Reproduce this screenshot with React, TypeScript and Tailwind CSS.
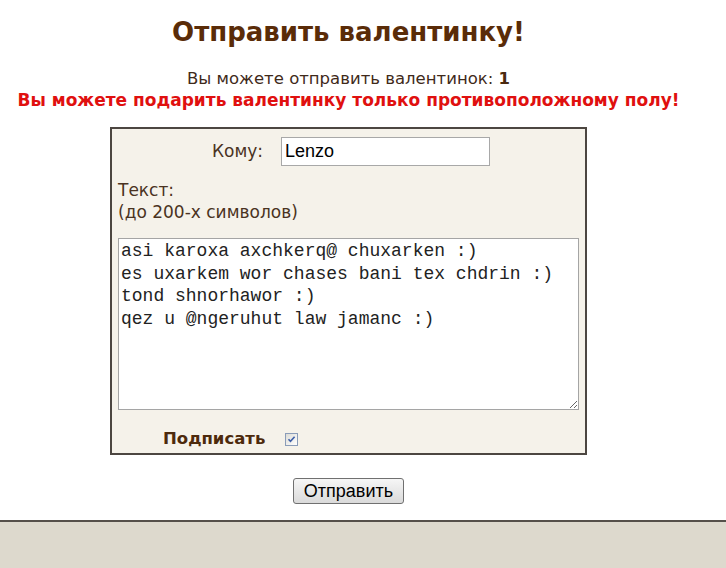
export default function App() {
  const message =
    "asi karoxa axchkerq@ chuxarken :)\nes uxarkem wor chases bani tex chdrin :)\ntond shnorhawor :)\nqez u @ngeruhut law jamanc :)";

  return (
    <div className="w-[726px] h-[568px] bg-white flex flex-col font-[family-name:DejaVu_Sans,Verdana,sans-serif] overflow-hidden">
      <div className="w-[697px] flex flex-col items-center">
        <h1 className="mt-[16px] h-[32px] leading-[32px] text-[26px] font-bold text-[#5a2c08]">
          Отправить валентинку!
        </h1>

        <p className="mt-[20px] h-[21px] leading-[21px] text-[16.5px] text-[#3f2a1a]">
          Вы можете отправить валентинок: <b className="text-[#4a2a10]">1</b>
        </p>
        <p className="h-[22px] leading-[22px] text-[17px] font-bold text-[#e0100f]">
          Вы можете подарить валентинку только противоположному полу!
        </p>

        <div className="mt-[16px] w-[477px] h-[328px] border-2 border-[#4c4641] bg-[#f5f2ea] flex flex-col px-[6px]">
          <div className="mt-[8px] flex items-center">
            <span className="w-[145px] text-right text-[17px] text-[#4a3322]">Кому:</span>
            <input
              readOnly
              value="Lenzo"
              className="ml-[18px] w-[209px] h-[29px] border border-[#a8a8a8] bg-white px-[3px] text-[18px] text-black font-[family-name:Liberation_Sans,Arial,sans-serif] outline-none"
            />
          </div>

          <div className="mt-[13px] text-[17px] leading-[22px] text-[#4a3322]">
            <div>Текст:</div>
            <div>(до 200-х символов)</div>
          </div>

          <textarea
            readOnly
            value={message}
            className="mt-[15px] w-[461px] h-[172px] border border-[#a5a5a5] bg-white px-[2px] py-[1px] text-[18px] leading-[22.7px] text-[#222] font-[family-name:Liberation_Mono,Courier_New,monospace] outline-none resize"
          />

          <div className="mt-[17px] flex items-center">
            <span className="ml-[45px] text-[16.5px] font-bold text-[#4d2a0c]">Подписать</span>
            <span className="ml-[20px] w-[13px] h-[13px] border border-[#8a9cb8] bg-gradient-to-br from-[#dcdcd6] to-white flex items-center justify-center">
              <svg viewBox="0 0 11 11" className="w-[11px] h-[11px]">
                <path d="M2.5 5.2 L4.5 7.4 L8.6 2.8" fill="none" stroke="#3e5fa8" strokeWidth="1.6" />
              </svg>
            </span>
          </div>
        </div>

        <button className="mt-[23px] w-[111px] h-[26px] rounded-[3px] border border-[#707070] bg-gradient-to-b from-[#f6f6f6] to-[#dadada] text-[18px] leading-[22px] text-black font-[family-name:Liberation_Sans,Arial,sans-serif]">
          Отправить
        </button>
      </div>

      <div className="mt-auto h-[48px] border-t-2 border-[#55504a] bg-[#ddd9cd]" />
    </div>
  );
}
